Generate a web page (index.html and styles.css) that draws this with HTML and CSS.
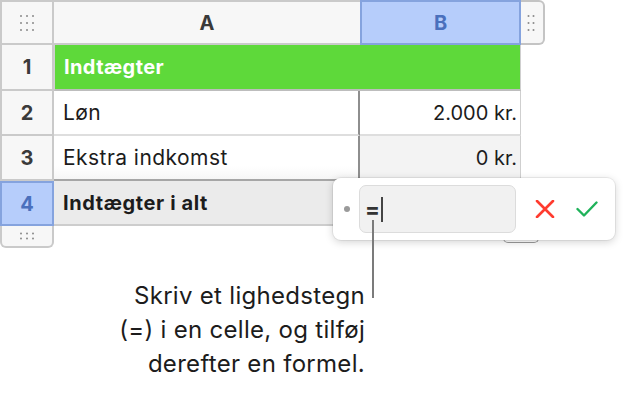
FILE: index.html
```html
<!DOCTYPE html>
<html lang="da">
<head>
<meta charset="utf-8">
<link rel="stylesheet" href="styles.css">
</head>
<body>
<div class="page">
  <div class="sheet">
    <div class="grid">
      <div class="corner">
        <svg class="dots" width="16" height="18" viewBox="0 0 16 18"><g fill="#8a8a8a"><circle cx="2" cy="2" r="1"/><circle cx="8" cy="2" r="1"/><circle cx="14" cy="2" r="1"/><circle cx="2" cy="9" r="1"/><circle cx="8" cy="9" r="1"/><circle cx="14" cy="9" r="1"/><circle cx="2" cy="16" r="1"/><circle cx="8" cy="16" r="1"/><circle cx="14" cy="16" r="1"/></g></svg>
      </div>
      <div class="colhead">A</div>
      <div class="colhead sel">B</div>
      <div class="handle-r">
        <svg width="8" height="18" viewBox="0 0 8 18"><g fill="#8a8a8a"><circle cx="1.5" cy="2" r="1"/><circle cx="6.5" cy="2" r="1"/><circle cx="1.5" cy="9" r="1"/><circle cx="6.5" cy="9" r="1"/><circle cx="1.5" cy="16" r="1"/><circle cx="6.5" cy="16" r="1"/></g></svg>
      </div>

      <div class="rowhead">1</div>
      <div class="cell title">Indtægter</div>
      <div class="spacer"></div>

      <div class="rowhead">2</div>
      <div class="cell a">Løn</div>
      <div class="cell b">2.000 kr.</div>
      <div class="spacer"></div>

      <div class="rowhead">3</div>
      <div class="cell a r3">Ekstra indkomst</div>
      <div class="cell b r3 shade">0 kr.</div>
      <div class="spacer"></div>

      <div class="rowhead sel">4</div>
      <div class="cell a r4 total">Indtægter i alt</div>
      <div class="cell b r4"></div>
      <div class="spacer"></div>

      <div class="handle-b">
        <svg width="16" height="8" viewBox="0 0 16 8"><g fill="#8a8a8a"><circle cx="2" cy="1.5" r="1"/><circle cx="8" cy="1.5" r="1"/><circle cx="14" cy="1.5" r="1"/><circle cx="2" cy="6.5" r="1"/><circle cx="8" cy="6.5" r="1"/><circle cx="14" cy="6.5" r="1"/></g></svg>
      </div>
    </div>

    <div class="cell-handle"></div>

    <div class="editor">
      <span class="bullet"></span>
      <div class="field"><span class="eq">=</span><span class="caret"></span></div>
      <svg class="btn-x" width="20" height="18" viewBox="0 0 20 18"><path d="M2 1 L18 17 M18 1 L2 17" stroke="#ff3b2f" stroke-width="2.6" stroke-linecap="round" fill="none"/></svg>
      <svg class="btn-ok" width="22" height="16" viewBox="0 0 22 16"><path d="M1.5 8 L8 14.5 L20.5 1.5" stroke="#1fb25a" stroke-width="2.4" stroke-linecap="round" stroke-linejoin="round" fill="none"/></svg>
    </div>

    <div class="callout"></div>
  </div>

  <p class="caption">Skriv et lighedstegn<br>(=) i en celle, og tilføj<br>derefter en formel.</p>
</div>
</body>
</html>
```

FILE: styles.css
```css
* { box-sizing: border-box; }

html, body {
  margin: 0;
  padding: 0;
  background: #ffffff;
}

body {
  font-family: "Inter", "Liberation Sans", Arial, sans-serif;
  color: #1c1c1c;
  width: 630px;
  height: 394px;
  overflow: hidden;
}

.page {
  display: flex;
  flex-direction: column;
}

.sheet {
  position: relative;
  width: 630px;
}

.grid {
  display: grid;
  grid-template-columns: 54px 306px 161px 24px;
  grid-template-rows: 45px 46px 45px 45px 45px 22px;
  width: 545px;
}

.corner {
  background: #f7f7f7;
  border: 2px solid #cacaca;
  display: flex;
  align-items: center;
  justify-content: center;
}

.colhead {
  background: #f7f7f7;
  border-top: 2px solid #cacaca;
  border-bottom: 2px solid #cacaca;
  display: flex;
  align-items: center;
  justify-content: center;
  font-weight: 700;
  font-size: 20px;
  color: #3a3a3a;
  padding-top: 1px;
}

.colhead.sel {
  background: #b6cdfb;
  border: 2px solid #85a3de;
  color: #4a70bd;
}

.handle-r {
  background: #f7f7f7;
  border: 2px solid #c4c4c4;
  border-left: none;
  border-radius: 0 6px 6px 0;
  display: flex;
  align-items: center;
  justify-content: center;
  padding-right: 2px;
}

.rowhead {
  background: #f7f7f7;
  border-left: 2px solid #cacaca;
  border-right: 2px solid #cacaca;
  border-bottom: 2px solid #cacaca;
  display: flex;
  align-items: center;
  justify-content: center;
  font-weight: 700;
  font-size: 20px;
  color: #3a3a3a;
}

.rowhead.sel {
  background: #b6cdfb;
  border: 2px solid #85a3de;
  color: #4a70bd;
}

.cell {
  display: flex;
  align-items: center;
  font-size: 20px;
  padding: 0 9px;
  color: #1c1c1c;
  background: #ffffff;
}

.cell.title {
  grid-column: 2 / span 2;
  background: #5ed93a;
  color: #ffffff;
  font-weight: 700;
  letter-spacing: 0.4px;
  border-bottom: 2px solid #bdbdbd;
  border-right: 1px solid #cfcfcf;
  border-left: 1px solid #d0d0d0;
}

.cell.a {
  font-size: 21px;
  letter-spacing: 0.45px;
  border-bottom: 2px solid #dedede;
  border-right: 2px solid #8e8e8e;
}

.cell.b {
  justify-content: flex-end;
  padding-right: 3px;
  border-bottom: 2px solid #dedede;
  border-right: 1px solid #cfcfcf;
}

.cell.r3 {
  border-bottom: 2px solid #a6a6a6;
  background: linear-gradient(to bottom, #ffffff 70%, #f6f6f6 100%);
}

.cell.shade {
  background: #f3f3f3;
}

.cell.r4 {
  background: #ebebeb;
  border-bottom: 2px solid #cdcdcd;
}

.cell.total {
  font-size: 20px;
  font-weight: 700;
  letter-spacing: 0.6px;
}

.handle-b {
  background: #f7f7f7;
  border: 2px solid #cacaca;
  border-top: none;
  border-radius: 0 0 6px 6px;
  display: flex;
  align-items: center;
  justify-content: center;
}

.cell-handle {
  position: absolute;
  left: 503px;
  top: 224px;
  width: 36px;
  height: 19px;
  border: 1.5px solid #9a9a9a;
  border-top: none;
  border-radius: 0 0 5px 5px;
  background: #ffffff;
}

.editor {
  position: absolute;
  left: 333px;
  top: 178px;
  width: 282px;
  height: 62px;
  background: #ffffff;
  border-radius: 8px;
  box-shadow: 0 0 0 1px rgba(0, 0, 0, 0.06), 0 2px 8px rgba(0, 0, 0, 0.18);
  display: flex;
  align-items: center;
  padding-left: 11px;
}

.bullet {
  width: 6px;
  height: 6px;
  border-radius: 50%;
  background: #9a9a9a;
  margin-right: 9px;
}

.field {
  width: 157px;
  height: 48px;
  background: #f1f1f1;
  border: 1px solid #dcdcdc;
  border-radius: 7px;
  display: flex;
  align-items: center;
  padding-left: 5px;
}

.eq {
  font-size: 22px;
  font-weight: 700;
  color: #333333;
  line-height: 1;
  margin-top: -1px;
}

.caret {
  width: 2px;
  height: 25px;
  background: #444444;
  margin-left: 1px;
}

.btn-x {
  margin-left: 19px;
}

.btn-ok {
  margin-left: 21px;
}

.callout {
  position: absolute;
  left: 372px;
  top: 220px;
  width: 2px;
  height: 78px;
  background: #7b7b7b;
}

.caption {
  margin: 31px 0 0 0;
  width: 365px;
  text-align: right;
  font-size: 24px;
  line-height: 34px;
  letter-spacing: 0.3px;
  color: #1c1c1c;
}
```
